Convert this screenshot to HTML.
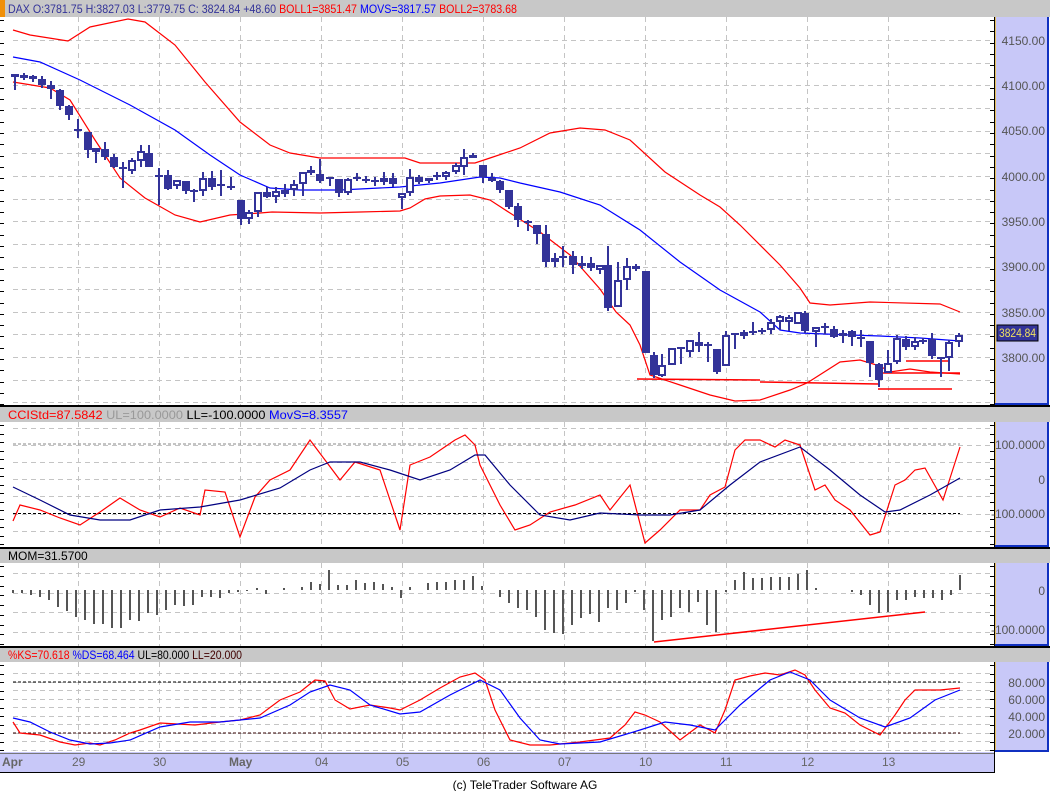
<!DOCTYPE html>
<html><head><meta charset="utf-8"><style>
html,body{margin:0;padding:0;background:#fff;}
body{width:1050px;height:791px;overflow:hidden;position:relative;font-family:"Liberation Sans",sans-serif;}
svg{position:absolute;left:0;top:0;}
text{font-family:"Liberation Sans",sans-serif;font-size:12px;}
</style></head><body>
<svg id="s" width="1050" height="791" viewBox="0 0 1050 791" xmlns="http://www.w3.org/2000/svg">
<rect x="0" y="0" width="1050" height="791" fill="#fff"/>
<rect x="0" y="0" width="1050" height="17" fill="#c8c8c8"/>
<rect x="0" y="0" width="5" height="17" fill="#f0900a"/>
<rect x="0" y="405" width="1050" height="2" fill="#000"/>
<rect x="0" y="407" width="1050" height="15" fill="#c8c8c8"/>
<rect x="0" y="547" width="1050" height="2" fill="#000"/>
<rect x="0" y="549" width="1050" height="14" fill="#c8c8c8"/>
<rect x="0" y="646" width="1050" height="2" fill="#000"/>
<rect x="0" y="648" width="1050" height="14" fill="#c8c8c8"/>
<g fill="#c8c8f8">
<rect x="995" y="17" width="53" height="388"/>
<rect x="995" y="422" width="53" height="125"/>
<rect x="995" y="563" width="53" height="83"/>
<rect x="995" y="662" width="53" height="90"/>
</g>
<g stroke="#e8c060" stroke-width="1"><line x1="995.5" y1="17" x2="995.5" y2="405"/><line x1="995.5" y1="422" x2="995.5" y2="547"/><line x1="995.5" y1="563" x2="995.5" y2="646"/><line x1="995.5" y1="662" x2="995.5" y2="752"/></g>
<g fill="#1030c0"><rect x="1047" y="17" width="2" height="388"/><rect x="995" y="403" width="54" height="2"/>
<rect x="1047" y="422" width="2" height="125"/><rect x="995" y="545" width="54" height="2"/>
<rect x="1047" y="563" width="2" height="83"/><rect x="995" y="644" width="54" height="2"/>
<rect x="1047" y="662" width="2" height="90"/><rect x="995" y="750" width="54" height="2"/></g>
<rect x="0" y="752" width="995" height="21" fill="#c8c8f8"/>
<line x1="0" y1="753.5" x2="995" y2="753.5" stroke="#777"/>
<line x1="0" y1="772.5" x2="995" y2="772.5" stroke="#000"/>
<line x1="994.5" y1="752" x2="994.5" y2="773" stroke="#000"/>
<g fill="#666" font-size="12"><text x="2" y="766" font-weight="bold">Apr</text><text x="72" y="766">29</text><text x="153" y="766">30</text><text x="229" y="766" font-weight="bold">May</text><text x="315" y="766">04</text><text x="396" y="766">05</text><text x="477" y="766">06</text><text x="558" y="766">07</text><text x="639" y="766">10</text><text x="720" y="766">11</text><text x="801" y="766">12</text><text x="882" y="766">13</text></g>
<text x="525" y="789" text-anchor="middle" font-size="11" fill="#000">(c) TeleTrader Software AG</text>
<g id="grid" stroke="#c4c4c4" stroke-dasharray="5,4" stroke-width="1"></g>
<g id="ticks" stroke="#000"></g>
<text x="8" y="13" fill="#333399" font-size="11.5" textLength="509" lengthAdjust="spacingAndGlyphs">DAX O:3781.75 H:3827.03 L:3779.75 C: 3824.84 +48.60 <tspan fill="#ff0000">BOLL1=3851.47</tspan> <tspan fill="#0000ff">MOVS=3817.57</tspan> <tspan fill="#ff0000">BOLL2=3783.68</tspan></text>
<text x="8" y="419" font-size="11" fill="#ff0000" textLength="340" lengthAdjust="spacingAndGlyphs">CCIStd=87.5842 <tspan fill="#999">UL=100.0000</tspan> <tspan fill="#000">LL=-100.0000</tspan> <tspan fill="#0000ff">MovS=8.3557</tspan></text>
<text x="8" y="560" font-size="11" fill="#000">MOM=31.5700</text>
<text x="8" y="659" font-size="11" fill="#ff0000" textLength="234" lengthAdjust="spacingAndGlyphs">%KS=70.618 <tspan fill="#0000ff">%DS=68.464</tspan> <tspan fill="#000">UL=80.000</tspan> <tspan fill="#400000">LL=20.000</tspan></text>
<g fill="#555" font-size="12" text-anchor="end">
<text x="1045" y="45">4150.00</text><text x="1045" y="90">4100.00</text><text x="1045" y="135">4050.00</text><text x="1045" y="181">4000.00</text><text x="1045" y="226">3950.00</text><text x="1045" y="271">3900.00</text><text x="1045" y="317">3850.00</text><text x="1045" y="362">3800.00</text>
<text x="1045" y="449">100.0000</text><text x="1045" y="484">0</text><text x="1045" y="518">-100.0000</text>
<text x="1045" y="595">0</text><text x="1045" y="634">-100.0000</text>
<text x="1045" y="687">80.000</text><text x="1045" y="704">60.000</text><text x="1045" y="721">40.000</text><text x="1045" y="738">20.000</text>
</g>
<rect x="997" y="325" width="41" height="16" fill="#333399" stroke="#000"/>
<text x="999" y="337" fill="#f0e060" font-size="12" textLength="37" lengthAdjust="spacingAndGlyphs">3824.84</text>
<g stroke-dasharray="3,2" stroke-width="1">
<line x1="13" y1="444" x2="960" y2="444" stroke="#888"/>
<line x1="13" y1="513.5" x2="960" y2="513.5" stroke="#000"/>
<line x1="13" y1="682" x2="960" y2="682" stroke="#000"/>
<line x1="13" y1="733" x2="960" y2="733" stroke="#300"/>
</g>
<g fill="none" stroke-width="1.2">
<polyline stroke="#ff0000" points="13,30 30,35 68,41 90,27 128,19 145,22 175,45 205,82 240,122 270,145 290,153 320,158 405,158 420,163 475,163 490,158 520,148 550,133 580,128 605,130 630,140 665,172 700,195 720,207 740,225 780,265 800,288 810,303 830,305 870,302 940,304 960,312"/>
<polyline stroke="#ff0000" points="13,82 50,88 70,100 95,140 120,178 145,198 175,215 200,222 230,215 260,213 272,212 320,213 360,212 400,211 410,208 425,199 440,196 470,195 490,200 510,213 540,232 570,255 600,289 616,312 630,325 640,345 650,375 680,385 710,395 735,401 760,400 790,390 807,383 840,362 860,360 880,366 890,372 910,369 930,372 960,374"/>
<polyline stroke="#0000ff" points="13,57 40,62 80,80 130,105 175,130 210,155 240,175 270,188 300,190 340,190 400,187 440,183 480,177 500,178 520,183 560,192 600,205 640,230 680,262 720,290 760,312 780,330 800,333 850,335 880,336 920,338 960,341"/>
<polyline stroke="#ff0000" points="13,521 20,505 40,510 60,518 80,525 100,512 120,498 140,510 160,517 180,508 200,515 205,490 225,492 240,537 255,497 270,480 290,470 310,440 325,460 340,480 355,462 380,470 400,530 410,465 430,457 455,440 465,435 475,445 480,465 500,505 515,530 530,525 550,512 575,505 600,495 610,510 630,485 645,543 660,530 680,510 700,510 710,495 725,487 735,450 745,440 760,440 775,447 785,440 800,445 815,490 825,485 835,500 850,510 870,535 880,532 895,485 905,480 915,470 925,468 943,500 960,447"/>
<polyline stroke="#000080" points="13,487 40,500 70,515 100,520 130,520 160,510 200,507 240,500 280,488 310,470 330,462 360,462 390,470 420,480 450,470 475,455 485,455 510,485 540,515 570,520 600,513 640,515 670,515 700,510 730,485 760,462 800,447 830,470 860,495 885,512 900,510 930,495 960,478"/>
<polyline stroke="#ff0000" points="13,722 20,733 40,735 60,742 75,745 90,743 100,745 115,740 130,733 140,730 160,723 195,725 220,722 240,720 260,715 280,700 300,692 315,680 325,681 335,700 350,709 370,705 390,708 400,710 420,700 440,688 460,677 475,673 485,680 495,710 510,740 530,745 550,745 580,742 610,738 625,725 635,712 645,715 660,722 680,740 700,725 715,733 725,710 735,680 750,676 765,673 780,675 795,670 805,675 815,690 830,708 845,713 860,725 880,735 895,715 905,700 915,690 925,690 940,690 960,688"/>
<polyline stroke="#0000ff" points="13,718 30,722 50,732 70,740 90,744 110,743 130,740 160,727 190,722 220,722 260,718 290,705 310,692 330,685 350,690 370,705 400,714 420,712 450,695 480,680 500,690 520,718 540,740 560,744 600,742 640,730 665,722 690,725 715,730 740,705 770,680 790,672 810,680 830,700 860,718 885,727 910,718 935,700 960,690"/>
<g stroke="#ff0000" stroke-width="1.5">
<line x1="637" y1="379" x2="760" y2="380"/><line x1="760" y1="382" x2="878" y2="384"/><line x1="878" y1="389" x2="952" y2="389"/><line x1="880" y1="373" x2="960" y2="373"/><line x1="906" y1="361" x2="950" y2="361"/>
<line x1="654" y1="642" x2="925" y2="612"/>
</g>
</g>
<g id="candles"></g>
<g id="mom" stroke="#555" stroke-width="2"></g>
</svg>
<script>
var NS="http://www.w3.org/2000/svg";
function el(p,t,a){var e=document.createElementNS(NS,t);for(var k in a)e.setAttribute(k,a[k]);p.appendChild(e);return e;}
var g=document.getElementById('grid');
var dx=[78,159,240,321,402,483,564,645,726,807,888];
dx.forEach(function(x){[[17,405],[422,547],[563,646],[662,752]].forEach(function(r){el(g,'line',{x1:x+.5,y1:r[0],x2:x+.5,y2:r[1]});});});
function hl(y){el(g,'line',{x1:13,y1:y+.5,x2:990,y2:y+.5});}
for(var y=40;y<404;y+=22.65)hl(Math.round(y));
for(var y=428;y<547;y+=17.1)hl(Math.round(y));
for(var y=573;y<646;y+=19.5)hl(Math.round(y));
for(var y=673;y<752;y+=8.5)hl(Math.round(y));
var t=document.getElementById('ticks');
[[17,405,11.3],[422,547,8.5],[563,646,9.75],[662,752,8.5]].forEach(function(r){for(var y=r[0]+3;y<r[1];y+=r[2]){var yy=Math.round(y)+.5;el(t,'line',{x1:0,y1:yy,x2:4,y2:yy});el(t,'line',{x1:990,y1:yy,x2:994,y2:yy});}});
el(t,'line',{x1:994.5,y1:17,x2:994.5,y2:405});el(t,'line',{x1:994.5,y1:422,x2:994.5,y2:547});el(t,'line',{x1:994.5,y1:563,x2:994.5,y2:646});el(t,'line',{x1:994.5,y1:662,x2:994.5,y2:752});
var C=[[15,74,77,74,90,'f'],[24,75,78,73,80,'f'],[33,76,79,75,82,'f'],[42,79,85,76,88,'f'],[51,85,89,81,99,'f'],[60,90,106,89,110,'f'],[69,106,115,105,120,'f'],[78,130,130,119,138,'d'],[88,132,150,132,158,'f'],[96,148,152,148,163,'h'],[105,149,157,142,160,'f'],[114,157,167,154,168,'f'],[123,168,168,162,188,'d'],[132,160,171,158,174,'h'],[141,151,161,145,167,'h'],[149,153,167,145,167,'f'],[159,176,176,168,205,'d'],[168,175,189,170,190,'f'],[177,180,186,180,189,'h'],[186,181,191,181,194,'f'],[194,191,191,189,202,'d'],[203,178,191,172,196,'h'],[212,178,187,171,190,'f'],[221,185,185,170,196,'d'],[231,187,187,177,190,'d'],[241,200,219,200,225,'f'],[249,212,219,210,224,'h'],[258,192,212,192,217,'h'],[267,192,197,187,198,'f'],[276,191,197,187,203,'h'],[285,190,194,184,197,'h'],[294,184,190,180,196,'h'],[303,172,184,172,196,'h'],[311,170,173,166,175,'h'],[320,174,181,159,183,'f'],[330,178,178,178,186,'d'],[339,179,193,179,197,'f'],[348,179,193,178,195,'h'],[357,178,178,173,181,'d'],[366,180,180,176,183,'d'],[375,181,181,177,186,'d'],[384,178,182,172,185,'h'],[393,178,184,173,187,'f'],[402,193,198,193,209,'h'],[410,177,193,169,196,'h'],[419,177,182,175,184,'f'],[429,178,180,178,183,'h'],[437,176,176,172,180,'d'],[446,172,177,171,180,'h'],[456,165,172,163,174,'h'],[464,157,167,149,175,'h'],[473,155,158,153,158,'f'],[483,165,177,165,183,'f'],[492,178,181,173,182,'f'],[500,181,190,180,193,'f'],[509,190,207,190,209,'f'],[518,206,220,203,227,'f'],[528,222,222,220,231,'d'],[537,225,234,225,244,'f'],[546,234,262,225,267,'f'],[555,258,262,253,267,'h'],[563,257,257,246,267,'d'],[573,256,265,251,274,'f'],[582,263,266,256,269,'h'],[591,263,268,257,271,'f'],[600,265,270,265,274,'h'],[608,265,308,246,311,'f'],[618,280,307,262,307,'h'],[627,266,280,258,290,'h'],[636,266,269,264,271,'f'],[646,271,353,271,353,'f'],[654,355,375,352,378,'f'],[662,365,376,354,377,'h'],[672,348,365,348,365,'h'],[681,348,348,348,364,'d'],[690,340,352,340,357,'h'],[699,342,346,332,352,'f'],[708,345,345,342,362,'d'],[717,349,372,349,374,'f'],[726,335,366,331,366,'h'],[735,334,334,334,349,'d'],[744,332,336,330,339,'h'],[753,332,332,322,335,'d'],[762,331,331,328,334,'d'],[771,322,330,319,334,'h'],[780,316,322,315,330,'h'],[789,317,322,315,331,'h'],[798,312,324,312,324,'h'],[805,313,331,311,333,'f'],[816,327,332,327,347,'h'],[825,327,327,323,334,'d'],[834,329,337,326,338,'f'],[843,333,336,330,343,'h'],[852,331,337,330,346,'f'],[861,338,338,330,347,'d'],[870,341,363,341,377,'f'],[879,364,380,363,387,'f'],[888,363,373,350,373,'h'],[897,338,362,335,364,'h'],[906,339,347,336,350,'f'],[915,341,347,337,350,'h'],[923,341,341,338,344,'d'],[932,339,356,333,359,'f'],[941,358,358,358,377,'d'],[949,342,358,340,371,'h'],[959,335,342,333,347,'h']];
var cg=document.getElementById('candles');var col='#333399';
C.forEach(function(c){var x=c[0];
el(cg,'rect',{x:x-1,y:c[3],width:2,height:c[4]-c[3],fill:col});
if(c[5]=='d'){el(cg,'rect',{x:x-4,y:c[1]-1,width:8,height:2,fill:col});}
else if(c[5]=='f'){el(cg,'rect',{x:x-4,y:c[1],width:8,height:Math.max(2,c[2]-c[1]),fill:col});}
else{el(cg,'rect',{x:x-3,y:c[1]+1,width:6,height:Math.max(1,c[2]-c[1]-2),fill:'#fff',stroke:col,'stroke-width':2});}
});
var M=[593,593,595,597,600,607,611,617,620,624,624,628,628,620,621,613,615,610,605,606,605,597,597,598,593,592,591,588,594,590,588,590,587,582,584,570,585,585,580,583,582,584,587,598,587,590,583,582,582,580,580,576,586,590,597,603,608,610,617,630,633,634,625,618,614,622,608,610,603,592,610,641,620,617,608,612,602,625,632,592,580,572,578,578,577,577,577,574,570,588,590,590,590,592,595,605,613,612,600,600,597,598,598,600,595,575];
var mg=document.getElementById('mom');var sp=(960-13)/(M.length-1);
M.forEach(function(v,i){var x=Math.round(13+i*sp);el(mg,'line',{x1:x,y1:590,x2:x,y2:v});});
</script>
</body></html>
